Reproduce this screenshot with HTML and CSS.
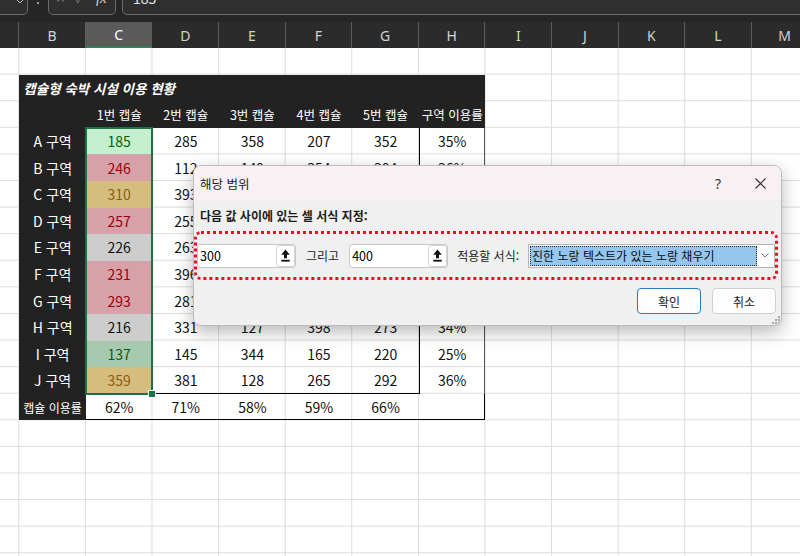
FILE: index.html
```html
<!DOCTYPE html>
<html lang="ko">
<head>
<meta charset="utf-8">
<title>해당 범위</title>
<link rel="stylesheet" href="styles.css">
</head>
<body>
<div class="app">
  <div class="fbar">
    <div class="namebox">
      <svg class="nb-chev" width="8" height="5" viewBox="0 0 8 5"><path d="M0.5 0.5 L4 4 L7.5 0.5" fill="none" stroke="#bdbdbd" stroke-width="1"/></svg>
    </div>
    <span class="gripdot"></span>
    <div class="fxbox"><span class="fx-x">✕</span><span class="fx-v">✓</span><span class="fx-f">fx</span></div>
    <div class="formula"><span class="ftext">185</span></div>
  </div>

  <div class="colhdr">
    <div class="ch"></div>
    <div class="ch">B</div>
    <div class="ch sel">C</div>
    <div class="ch">D</div>
    <div class="ch">E</div>
    <div class="ch">F</div>
    <div class="ch">G</div>
    <div class="ch">H</div>
    <div class="ch">I</div>
    <div class="ch">J</div>
    <div class="ch">K</div>
    <div class="ch">L</div>
    <div class="ch">M</div>
  </div>

  <div class="sheet">
    <div class="tbl">
      <div class="title">캡슐형 숙박 시설 이용 현황</div>

      <div class="hd"></div><div class="hd">1번 캡슐</div><div class="hd">2번 캡슐</div><div class="hd">3번 캡슐</div><div class="hd">4번 캡슐</div><div class="hd">5번 캡슐</div><div class="hd">구역 이용률</div>

      <div class="lb">A 구역</div><div class="cc ga">185</div><div class="d">285</div><div class="d">358</div><div class="d">207</div><div class="d">352</div><div class="d hc">35%</div>
      <div class="lb">B 구역</div><div class="cc r">246</div><div class="d">112</div><div class="d">149</div><div class="d">354</div><div class="d">304</div><div class="d hc">36%</div>
      <div class="lb">C 구역</div><div class="cc y">310</div><div class="d">393</div><div class="d">215</div><div class="d">188</div><div class="d">301</div><div class="d hc">37%</div>
      <div class="lb">D 구역</div><div class="cc r">257</div><div class="d">255</div><div class="d">372</div><div class="d">146</div><div class="d">239</div><div class="d hc">33%</div>
      <div class="lb">E 구역</div><div class="cc n">226</div><div class="d">263</div><div class="d">190</div><div class="d">311</div><div class="d">287</div><div class="d hc">35%</div>
      <div class="lb">F 구역</div><div class="cc r">231</div><div class="d">396</div><div class="d">248</div><div class="d">175</div><div class="d">362</div><div class="d hc">39%</div>
      <div class="lb">G 구역</div><div class="cc r">293</div><div class="d">281</div><div class="d">159</div><div class="d">327</div><div class="d">244</div><div class="d hc">35%</div>
      <div class="lb">H 구역</div><div class="cc n">216</div><div class="d">331</div><div class="d">127</div><div class="d">398</div><div class="d">273</div><div class="d hc">34%</div>
      <div class="lb">I 구역</div><div class="cc g">137</div><div class="d">145</div><div class="d">344</div><div class="d">165</div><div class="d">220</div><div class="d hc">25%</div>
      <div class="lb">J 구역</div><div class="cc y">359</div><div class="d jb">381</div><div class="d jb">128</div><div class="d jb">265</div><div class="d jb">292</div><div class="d hc">36%</div>
      <div class="lb sm">캡슐 이용률</div><div class="d ub">62%</div><div class="d ub">71%</div><div class="d ub">58%</div><div class="d ub">59%</div><div class="d ub">66%</div><div class="d uh"></div>

      <div class="selbox"><span class="handle"></span></div>
    </div>
  </div>

  <div class="dialog">
    <div class="dtitle">
      <span class="dt">해당 범위</span>
      <span class="help">?</span>
      <span class="close"><svg width="11" height="11" viewBox="0 0 11 11"><path d="M0.5 0.5 L10.5 10.5 M10.5 0.5 L0.5 10.5" stroke="#2b2b2b" stroke-width="1.1" fill="none"/></svg></span>
    </div>
    <div class="dlabel">다음 값 사이에 있는 셀 서식 지정:</div>
    <div class="focusbox">
      <div class="inp"><span class="val">300</span><span class="spin"><svg width="9" height="13" viewBox="0 0 9 13"><path d="M4.5 0.5 L8.8 5.8 L6 5.8 L6 9.2 L3 9.2 L3 5.8 L0.2 5.8 Z" fill="#111"/><rect x="0.3" y="10.8" width="8.4" height="1.8" fill="#111"/></svg></span></div>
      <span class="txt t1">그리고</span>
      <div class="inp"><span class="val">400</span><span class="spin"><svg width="9" height="13" viewBox="0 0 9 13"><path d="M4.5 0.5 L8.8 5.8 L6 5.8 L6 9.2 L3 9.2 L3 5.8 L0.2 5.8 Z" fill="#111"/><rect x="0.3" y="10.8" width="8.4" height="1.8" fill="#111"/></svg></span></div>
      <span class="txt t2">적용할 서식:</span>
      <div class="select"><span class="opt">진한 노랑 텍스트가 있는 노랑 채우기</span><span class="dd"><svg width="8" height="5" viewBox="0 0 8 5"><path d="M0.5 0.5 L4 4 L7.5 0.5" fill="none" stroke="#777" stroke-width="1"/></svg></span></div>
    </div>
    <div class="btns">
      <button class="btn primary">확인</button>
      <button class="btn">취소</button>
    </div>
    <svg class="grip" width="8" height="8" viewBox="0 0 8 8"><g fill="#a8a8a8"><rect x="6" y="0" width="2" height="2"/><rect x="3" y="3" width="2" height="2"/><rect x="6" y="3" width="2" height="2"/><rect x="0" y="6" width="2" height="2"/><rect x="3" y="6" width="2" height="2"/><rect x="6" y="6" width="2" height="2"/></g></svg>
  </div>
</div>
</body>
</html>
```

FILE: styles.css
```css
html, body {
  margin: 0;
  padding: 0;
  background: #ffffff;
}
body {
  width: 800px;
  height: 556px;
  overflow: hidden;
  font-family: "Noto Sans CJK KR", "Noto Sans", sans-serif;
}
.app {
  position: relative;
  width: 800px;
  height: 556px;
  overflow: hidden;
}

/* formula bar */
.fbar {
  height: 22px;
  background: #262626;
  display: flex;
  align-items: flex-start;
  overflow: hidden;
}
.namebox,
.fxbox,
.formula {
  box-sizing: border-box;
  height: 24px;
  margin-top: -9px;
  border: 1px solid #6a6a6a;
  border-radius: 5px;
  background: #2f2f2f;
  display: flex;
  align-items: flex-end;
  padding-bottom: 9px;
  line-height: 14px;
}
.namebox {
  width: 38px;
  margin-left: -10px;
  justify-content: flex-end;
  padding-right: 3px;
  padding-bottom: 10px;
}
.gripdot {
  width: 2px;
  height: 2px;
  border-radius: 1px;
  background: #c4c4c4;
  margin-left: 9px;
  margin-top: 2px;
}
.fxbox {
  width: 68px;
  margin-left: 9px;
  padding-left: 6px;
  font-size: 13px;
  color: #6f6f6f;
}
.fx-v {
  margin-left: 9px;
}
.fx-f {
  margin-left: 12px;
  font-family: "Liberation Serif", serif;
  font-style: italic;
  font-size: 15px;
  color: #cfcfcf;
}
.formula {
  flex: 1;
  margin-left: 6px;
  margin-right: -10px;
  padding-left: 10px;
  font-size: 14px;
  color: #e6e6e6;
}

/* column headers */
.colhdr {
  display: grid;
  grid-template-columns: 19.3px repeat(12, 66.6px);
  height: 26px;
  background: #2b2b2b;
}
.ch {
  box-sizing: border-box;
  border-right: 1px solid #5c5c5c;
  display: flex;
  align-items: center;
  justify-content: center;
  font-family: "Noto Sans", sans-serif;
  font-size: 14px;
  color: #d2d2d2;
}
.ch.sel {
  background: #5a5a5a;
  color: #ffffff;
  border-bottom: 2px solid #2c8557;
}

/* sheet */
.sheet {
  height: 508px;
  background-color: #ffffff;
  background-image:
    linear-gradient(to right, transparent 65.6px, #dcdcdc 65.6px),
    linear-gradient(to bottom, transparent 25.6px, #dcdcdc 25.6px);
  background-size: 66.6px 100%, 100% 26.6px;
  background-position: 19.3px 0, 0 0;
  overflow: hidden;
}
.tbl {
  position: relative;
  display: grid;
  grid-template-columns: repeat(7, 66.6px);
  grid-auto-rows: 26.6px;
  width: max-content;
  margin-left: 19.3px;
  padding-top: 26.6px;
  font-size: 14px;
  color: #111111;
}
.tbl > div {
  display: flex;
  align-items: center;
  justify-content: center;
  white-space: nowrap;
}
.tbl > .title {
  grid-column: 1 / -1;
  justify-content: flex-start;
  padding-left: 4px;
  background: #222222;
  color: #ffffff;
  font-style: italic;
  font-weight: 700;
  font-size: 13.5px;
}
.hd {
  background: #222222;
  color: #ffffff;
  font-size: 12.5px;
}
.lb {
  background: #222222;
  color: #ffffff;
}
.lb.sm {
  font-size: 12px;
}
.cc.ga { background: #c6efce; color: #006100; }
.cc.g  { background: #a7c9ae; color: #0e5a1e; }
.cc.r  { background: #d6a1a9; color: #9c0006; }
.cc.y  { background: #d4bd7d; color: #8e5a12; }
.cc.n  { background: #cdcdcd; color: #111111; }
.hc {
  box-shadow: inset 1px 0 #000000, inset -1px 0 #555555;
}
.jb,
.ub {
  box-shadow: inset 0 -1px #000000;
}
.uh {
  box-shadow: inset 0 -1px #000000, inset -1px 0 #000000;
}
.tbl > .selbox {
  position: absolute;
  left: 65.6px;
  top: 79.1px;
  width: 68.6px;
  height: 268px;
  box-sizing: border-box;
  border: 2px solid #1e7145;
  pointer-events: none;
}
.handle {
  position: absolute;
  right: -5px;
  bottom: -5px;
  width: 6px;
  height: 6px;
  background: #1e7145;
  border: 1px solid #ffffff;
}

/* dialog */
.dialog {
  position: absolute;
  left: 193px;
  top: 165px;
  width: 589px;
  height: 161px;
  box-sizing: border-box;
  border: 1px solid #bcbcbc;
  border-radius: 8px;
  background: #f0f0f0;
  box-shadow: 0 6px 18px rgba(0, 0, 0, 0.28);
  overflow: hidden;
  font-size: 12px;
  color: #1b1b1b;
}
.dtitle {
  height: 34px;
  background: #f9f0f4;
  display: flex;
  align-items: center;
  padding-left: 6px;
}
.dt {
  font-size: 12.5px;
}
.help {
  margin-left: auto;
  width: 22px;
  text-align: center;
  font-family: "Noto Sans", sans-serif;
  font-size: 14px;
  color: #333333;
}
.close {
  width: 42px;
  margin-left: 10px;
  display: flex;
  justify-content: center;
  align-items: center;
}
.dlabel {
  margin: 8px 0 0 6px;
  line-height: 15px;
  font-weight: 700;
  font-size: 12px;
}
.focusbox {
  box-sizing: border-box;
  height: 49px;
  margin: 8px 3px 0 0;
  border: 3px dotted #e3121e;
  border-radius: 7px;
  display: flex;
  align-items: center;
}
.inp {
  box-sizing: border-box;
  width: 99px;
  height: 24px;
  background: #ffffff;
  border: 1px solid #c8c8c8;
  border-radius: 3px;
  display: flex;
  align-items: center;
  padding-left: 2px;
}
.val {
  font-size: 12.5px;
  color: #000000;
}
.spin {
  margin-left: auto;
  margin-right: 0;
  box-sizing: border-box;
  width: 19px;
  height: 22px;
  border: 1px solid #d4d4d4;
  border-radius: 3px;
  background: #ffffff;
  display: flex;
  align-items: center;
  justify-content: center;
}
.txt {
  font-size: 12px;
}
.t1 {
  margin: 0 10px 0 10px;
}
.t2 {
  margin: 0 9px 0 9px;
}
.select {
  flex: 1;
  box-sizing: border-box;
  height: 24px;
  border: 1px solid #b4b4b4;
  background: #ffffff;
  display: flex;
  padding: 1px;
}
.opt {
  flex: 1;
  background: #95c6ee;
  outline: 1px dotted #2d2d2d;
  outline-offset: -1px;
  padding-left: 2px;
  line-height: 20px;
  font-size: 12px;
  color: #0a0a0a;
}
.dd {
  width: 16px;
  display: flex;
  align-items: center;
  justify-content: center;
}
.btns {
  display: flex;
  justify-content: flex-end;
  gap: 11px;
  margin-top: 8px;
  padding-right: 5px;
}
.btn {
  box-sizing: border-box;
  width: 64px;
  height: 26px;
  border: 1px solid #cfcfcf;
  border-radius: 4px;
  background: #fdfdfd;
  font-family: "Noto Sans CJK KR", "Noto Sans", sans-serif;
  font-size: 12px;
  color: #1b1b1b;
  padding: 0;
}
.btn.primary {
  border-color: #2f78c4;
}
.grip {
  position: absolute;
  right: 1px;
  bottom: 1px;
}
```
